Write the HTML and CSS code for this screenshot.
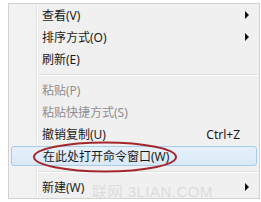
FILE: index.html
```html
<!DOCTYPE html>
<html>
<head>
<meta charset="utf-8">
<link rel="stylesheet" href="styles.css">
</head>
<body>
<div class="menu">
  <div class="item"><span class="label">查看(V)</span><span class="arrow"></span></div>
  <div class="item"><span class="label">排序方式(O)</span><span class="arrow"></span></div>
  <div class="item"><span class="label">刷新(E)</span></div>
  <div class="sep"></div>
  <div class="item disabled"><span class="label">粘贴(P)</span></div>
  <div class="item disabled"><span class="label">粘贴快捷方式(S)</span></div>
  <div class="item"><span class="label">撤销复制(U)</span><span class="shortcut">Ctrl+Z</span></div>
  <div class="item hover"><span class="label">在此处打开命令窗口(W)</span></div>
  <div class="sep"></div>
  <div class="item"><span class="label">新建(W)</span><span class="arrow"></span></div>
  <svg class="ring" width="148" height="34" viewBox="0 0 148 34">
    <ellipse cx="73" cy="17" rx="71" ry="14.5" fill="none" stroke="#a3262b" stroke-width="2"/>
  </svg>
  <div class="watermark">联网 3LIAN.COM</div>
</div>
</body>
</html>
```
FILE: styles.css
```css
html, body {
  margin: 0;
  padding: 0;
  background: #ffffff;
}
body {
  font-family: "Noto Sans", "Noto Sans CJK SC", sans-serif;
  font-size: 12px;
  color: #1a1a1a;
}
.menu {
  position: relative;
  margin: 3px 0 0 8px;
  width: 250px;
  border: 1px solid #d2d2d2;
  background: linear-gradient(to right, #f2f2f2 0, #f2f2f2 27px, #e2e3e3 27px, #e2e3e3 28px, #ffffff 28px, #ffffff 29px, #f0f0f0 29px);
}
.item {
  height: 22px;
  display: flex;
  align-items: center;
  padding: 0 10px 0 33px;
  box-sizing: border-box;
}
.label {
  flex: 1;
  white-space: nowrap;
}
.disabled {
  color: #8e8e8e;
}
.arrow {
  width: 0;
  height: 0;
  border-left: 4px solid #111;
  border-top: 4px solid transparent;
  border-bottom: 4px solid transparent;
}
.shortcut {
  margin-right: 9px;
}
.hover {
  height: 20px;
  margin: 1px 2px;
  padding-left: 31px;
  border: 1px solid #a9cbee;
  border-radius: 3px;
  background: linear-gradient(#e6f0fb, #d9e8f7);
}
.sep {
  height: 9px;
  margin-left: 29px;
  box-sizing: border-box;
  padding-top: 4px;
}
.sep::before {
  content: "";
  display: block;
  height: 1px;
  background: #e0e0e0;
  border-bottom: 1px solid #ffffff;
}
.ring {
  position: absolute;
  left: 23px;
  top: 136px;
}
.watermark {
  position: absolute;
  left: 83px;
  top: 176px;
  font-family: "Liberation Sans", "Noto Sans CJK SC", sans-serif;
  font-size: 15px;
  color: #dcdcdc;
  letter-spacing: 0.5px;
  white-space: nowrap;
}
```
